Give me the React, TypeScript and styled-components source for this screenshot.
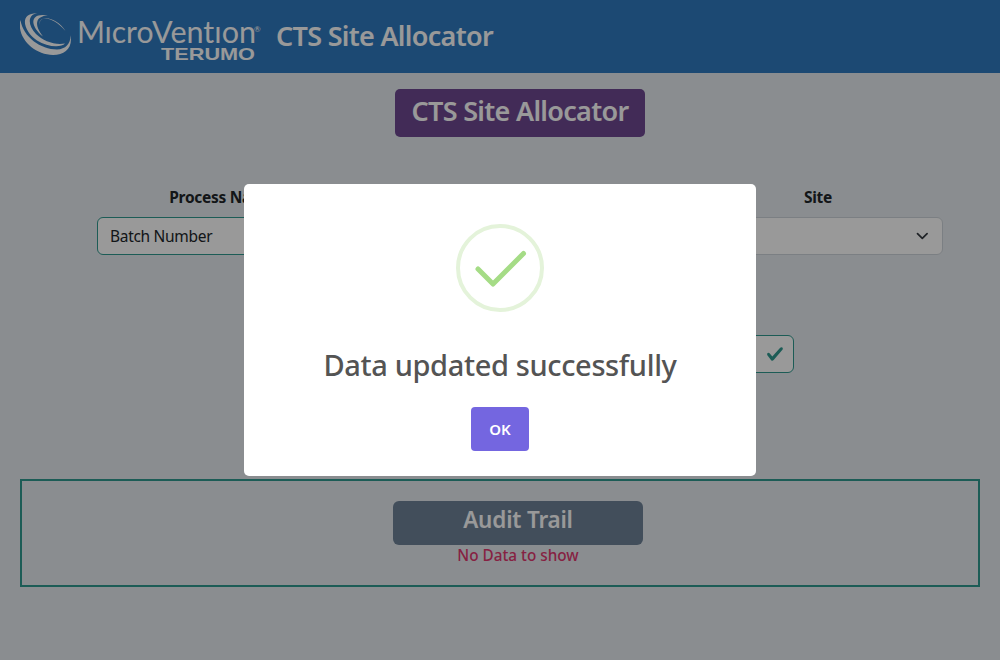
import React from "react";
import styled, { createGlobalStyle } from "styled-components";

const GlobalStyle = createGlobalStyle`
  * { box-sizing: border-box; }
  body {
    margin: 0;
    background: #e6ecf0;
    color: #212529;
    font: 400 16px/24px "Noto Sans", "Open Sans", sans-serif;
    overflow: hidden;
  }
`;

const Page = styled.div`
  height: 660px;
  background: #e6ecf0;
`;

const Header = styled.header`
  height: 73px;
  display: flex;
  align-items: flex-start;
  background: #307ac0;
  padding-left: 20px;
`;

const Logo = styled.svg`
  width: 241px;
  height: 73px;
  flex: none;
  font-variant-ligatures: none;
`;

const Brand = styled.h1`
  margin: 15px 0 0 15px;
  font-size: 27px;
  line-height: 41px;
  font-weight: 600;
  letter-spacing: -0.7px;
  color: #fff;
  white-space: nowrap;
`;

const Main = styled.main`
  padding: 16px 20px 0;
`;

const TitleBadge = styled.h2`
  width: 250px;
  height: 48px;
  margin: 0 0 0 375px;
  border-radius: 5px;
  background: #6e4891;
  color: #fff;
  font-size: 27px;
  line-height: 43px;
  font-weight: 600;
  letter-spacing: -0.7px;
  text-align: center;
  white-space: nowrap;
`;

const Filters = styled.div`
  display: grid;
  grid-template-columns: repeat(3, 250px);
  column-gap: 48px;
  padding: 48px 0 0 77px;
`;

const Field = styled.label`
  display: flex;
  flex-direction: column;
  gap: 8px;
  font-weight: 700;
  font-size: 15.5px;
  letter-spacing: -0.3px;
  text-align: center;
`;

const Control = styled.div<{ $valid?: boolean }>`
  display: flex;
  align-items: center;
  justify-content: space-between;
  height: 38px;
  padding: 0 12px;
  border: 1px solid ${(p) => (p.$valid ? "#309a90" : "#ced4da")};
  border-radius: 6px;
  background: #fff;
  font-weight: 400;
  font-size: 15.5px;
  letter-spacing: -0.3px;
`;

const BatchRow = styled.div`
  display: flex;
  justify-content: flex-end;
  padding: 80px 186px 0 0;

  > div {
    width: 550px;
    justify-content: flex-end;
    padding-right: 9px;
  }
`;

const Audit = styled.section`
  height: 108px;
  margin-top: 106px;
  padding: 20px 0 0 36px;
  display: flex;
  flex-direction: column;
  align-items: center;
  border: 2px solid #309a90;
`;

const AuditTitle = styled.h3`
  width: 250px;
  height: 44px;
  margin: 0;
  border-radius: 6px;
  background: #6e8298;
  color: #fff;
  font-size: 22.5px;
  line-height: 37px;
  font-weight: 600;
  letter-spacing: -0.2px;
  text-align: center;
`;

const Empty = styled.p`
  margin: -2px 0 0;
  color: #e0386f;
  font-size: 15.3px;
  font-weight: 500;
`;

const Overlay = styled.div`
  position: fixed;
  inset: 0;
  display: flex;
  align-items: center;
  justify-content: center;
  background: rgba(0, 0, 0, 0.4);
`;

const Modal = styled.div`
  width: 512px;
  height: 292px;
  padding-top: 40px;
  display: flex;
  flex-direction: column;
  align-items: center;
  border-radius: 5px;
  background: #fff;
`;

const Message = styled.div`
  margin-top: 32px;
  font-size: 29px;
  line-height: 42px;
  font-weight: 500;
  letter-spacing: -0.36px;
  color: #545454;
  white-space: nowrap;
`;

const OkButton = styled.button`
  width: 58px;
  height: 44px;
  margin-top: 21px;
  padding: 0;
  border: 0;
  border-radius: 4px;
  background: #7466e0;
  color: #fff;
  font: 600 15px "Noto Sans", sans-serif;
`;

function CompanyLogo() {
  return (
    <Logo viewBox="20 0 241 73" fill="#fff" aria-label="MicroVention Terumo">
      <path d="M20.5 20C16 37 34 55 53 55C65 55 73 48 70.5 35C71 43 66 49.5 57 49.5C41 49.5 23 37 20.5 20Z" />
      <path d="M37 13.3C18 13 24 32 37 40.5C47 47 61 48 65 43.5C55 45.5 43 41 36 34C28 26 27 15 37 13.3Z" />
      <path d="M48 15.5C30 12 29 25 43 36.5C34 25 35 16 48 15.5Z" />
      <path d="M39.5 25C38 15 53 16 65.5 31C58 18 39 13 39.5 25Z" />
      <g fontFamily="Lato">
        <text x="77" y="42.5" fontSize="30" textLength="28" lengthAdjust="spacingAndGlyphs">M</text>
        <text x="104.5" y="42.5" fontSize="30" textLength="49" lengthAdjust="spacingAndGlyphs">ıcro</text>
        <text x="152" y="42.5" fontSize="30" textLength="104" lengthAdjust="spacingAndGlyphs">Ventıon</text>
        <text x="254" y="31.5" fontSize="8">®</text>
      </g>
      <text x="161" y="59.8" fontFamily="Liberation Sans" fontWeight="700" fontSize="17" textLength="94" lengthAdjust="spacingAndGlyphs">TERUMO</text>
    </Logo>
  );
}

export default function App() {
  return (
    <>
      <GlobalStyle />
      <Page>
        <Header>
          <CompanyLogo />
          <Brand>CTS Site Allocator</Brand>
        </Header>
        <Main>
          <TitleBadge>CTS Site Allocator</TitleBadge>
          <Filters>
            <Field>
              Process Name
              <Control $valid>Batch Number</Control>
            </Field>
            <span />
            <Field>
              Site
              <Control>
                <span />
                <svg width="16" height="16" viewBox="0 0 16 16" fill="none" stroke="#343a40" strokeWidth="1.7" strokeLinecap="round" strokeLinejoin="round">
                  <path d="m3.5 5.7 4.8 4.7 4.8-4.7" />
                </svg>
              </Control>
            </Field>
          </Filters>
          <BatchRow>
            <Control $valid>
              <svg width="18" height="18" viewBox="0 0 8 8" fill="#309a90">
                <path d="M2.3 6.73.6 4.53c-.4-1.04.46-1.4 1.1-.8l1.1 1.4 3.4-3.8c.6-.63 1.6-.27 1.2.7l-4 4.6c-.43.5-.8.4-1.1.1z" />
              </svg>
            </Control>
          </BatchRow>
          <Audit>
            <AuditTitle>Audit Trail</AuditTitle>
            <Empty>No Data to show</Empty>
          </Audit>
        </Main>
      </Page>
      <Overlay>
        <Modal role="dialog">
          <svg width="88" height="88" viewBox="0 0 88 88" fill="none">
            <circle cx="44" cy="44" r="42" stroke="#e4f3da" strokeWidth="4" />
            <path d="M22 45 37 60 67.5 29.5" stroke="#a5dc86" strokeWidth="5" strokeLinecap="round" strokeLinejoin="round" />
          </svg>
          <Message>Data updated successfully</Message>
          <OkButton>OK</OkButton>
        </Modal>
      </Overlay>
    </>
  );
}
